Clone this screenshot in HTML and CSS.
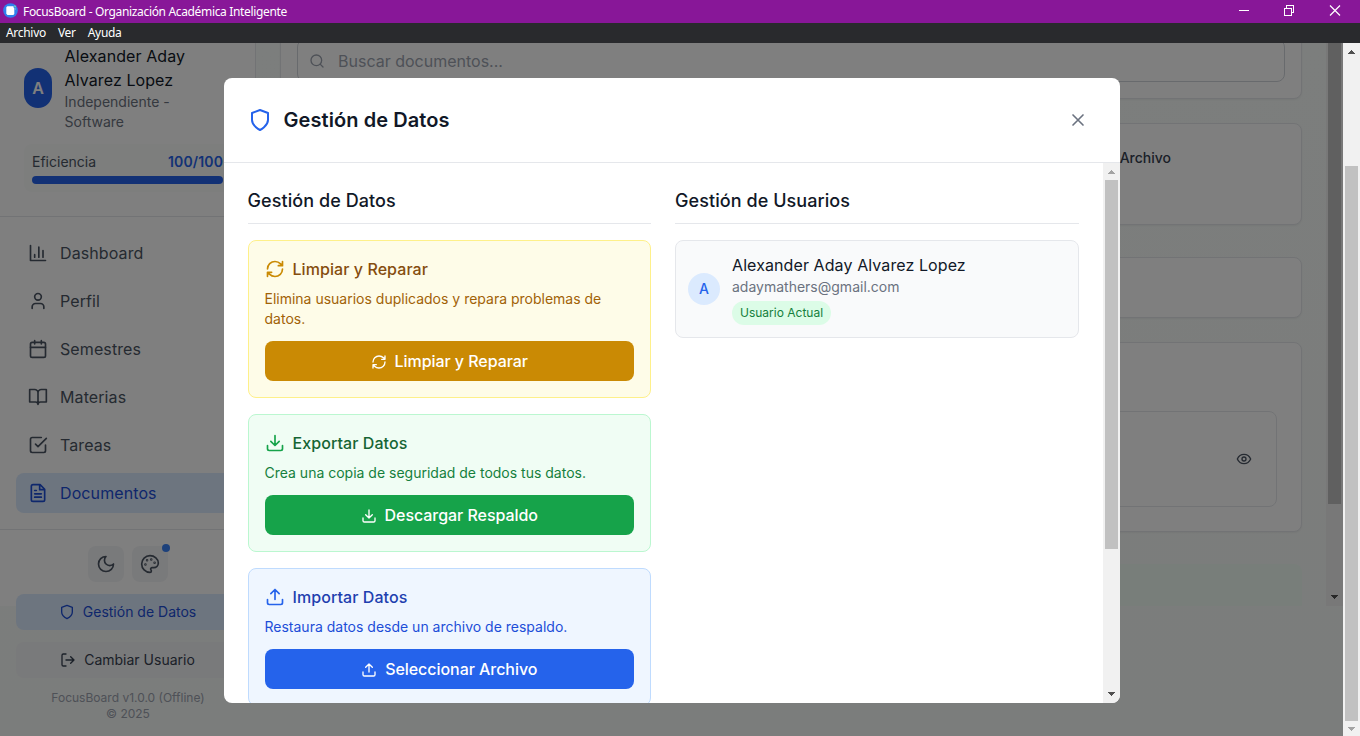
FILE: index.html
```html
<!DOCTYPE html>
<html lang="es">
<head>
<meta charset="utf-8">
<title>FocusBoard - Organización Académica Inteligente</title>
<link rel="stylesheet" href="styles.css">
</head>
<body>
<svg class="defs" width="0" height="0">
  <symbol id="shield" viewBox="0 0 24 24"><path d="M12 22s8-4 8-10V5l-8-3-8 3v7c0 6 8 10 8 10"/></symbol>
  <symbol id="refresh" viewBox="0 0 24 24"><path d="M3 12a9 9 0 0 1 9-9 9.75 9.75 0 0 1 6.74 2.74L21 8M21 3v5h-5M21 12a9 9 0 0 1-9 9 9.75 9.75 0 0 1-6.74-2.74L3 16M8 16H3v5"/></symbol>
  <symbol id="download" viewBox="0 0 24 24"><path d="M21 15v4a2 2 0 0 1-2 2H5a2 2 0 0 1-2-2v-4M7 10l5 5 5-5M12 15V3"/></symbol>
  <symbol id="upload" viewBox="0 0 24 24"><path d="M21 15v4a2 2 0 0 1-2 2H5a2 2 0 0 1-2-2v-4M17 8l-5-5-5 5M12 3v12"/></symbol>
  <symbol id="up" viewBox="0 0 7 4"><path d="M3 0h1v1h1v1h1v1h1v1H0V3h1V2h1V1h1z"/></symbol>
  <symbol id="down" viewBox="0 0 7 4"><path d="M0 0h7v1H6v1H5v1H4v1H3V3H2V2H1V1H0z"/></symbol>
</svg>
<div class="window">
  <header class="titlebar">
    <svg class="app-icon" width="15" height="15" viewBox="0 0 15 15"><circle cx="7.5" cy="7.5" r="7.3" fill="#2f80ed"/><path d="M3.3 4.2l1-1h6.2v1.2l.8.5V11l-1 1H4.5l-1.2-1.2z" fill="#fff"/><path d="M11 3h1.3v1.3M12.5 5.5v1" stroke="#7be0b0" fill="none"/></svg>
    <span class="title">FocusBoard - Organización Académica Inteligente</span>
    <svg class="controls" width="102" height="11" viewBox="0 0 102 11"><path d="M0 5.5h10M45.500 3.500h7v7h-7zM47.500 3.500v-3h7v7h-2" shape-rendering="crispEdges"/><path d="M91 .5l10 10M101 .5l-10 10" stroke-width="1.2"/></svg>
  </header>
  <nav class="menubar"><span>Archivo</span><span>Ver</span><span>Ayuda</span></nav>
  <div class="view">
    <div class="page">
      <aside class="sidebar">
        <section class="profile">
          <div class="person">
            <div class="avatar">A</div>
            <div><div class="name">Alexander Aday<br>Alvarez Lopez</div><div class="role">Independiente -<br>Software</div></div>
          </div>
          <div class="efficiency">
            <div class="eff-row"><span>Eficiencia</span><b>100/100</b></div>
            <div class="bar"></div>
          </div>
        </section>
        <nav class="nav">
          <a><svg class="icon i20" viewBox="0 0 24 24"><path d="M3 3v18h18M18 17V9M13 17V5M8 17v-3"/></svg>Dashboard</a>
          <a><svg class="icon i20" viewBox="0 0 24 24"><path d="M19 21v-2a4 4 0 0 0-4-4H9a4 4 0 0 0-4 4v2"/><circle cx="12" cy="7" r="4"/></svg>Perfil</a>
          <a><svg class="icon i20" viewBox="0 0 24 24"><rect x="3" y="4" width="18" height="18" rx="2"/><path d="M16 2v4M8 2v4M3 10h18"/></svg>Semestres</a>
          <a><svg class="icon i20" viewBox="0 0 24 24"><path d="M2 3h6a4 4 0 0 1 4 4v14a3 3 0 0 0-3-3H2zM22 3h-6a4 4 0 0 0-4 4v14a3 3 0 0 1 3-3h7z"/></svg>Materias</a>
          <a><svg class="icon i20" viewBox="0 0 24 24"><path d="M9 11l3 3L22 4M21 12v7a2 2 0 0 1-2 2H5a2 2 0 0 1-2-2V5a2 2 0 0 1 2-2h11"/></svg>Tareas</a>
          <a class="active"><svg class="icon i20" viewBox="0 0 24 24"><path d="M14.500 2H6a2 2 0 0 0-2 2v16a2 2 0 0 0 2 2h12a2 2 0 0 0 2-2V7.500zM14 2v6h6M16 13H8M16 17H8M10 9H8"/></svg>Documentos</a>
        </nav>
        <section class="side-foot">
          <div class="tools">
            <span class="tool"><svg class="icon i20" viewBox="0 0 24 24"><path d="M12 3a6 6 0 0 0 9 9 9 9 0 1 1-9-9Z"/></svg></span>
            <span class="tool"><svg class="icon i20" viewBox="0 0 24 24"><circle cx="13.500" cy="6.500" r=".5"/><circle cx="17.500" cy="10.500" r=".5"/><circle cx="8.500" cy="7.500" r=".5"/><circle cx="6.500" cy="12.500" r=".5"/><path d="M12 2C6.500 2 2 6.500 2 12s4.500 10 10 10c.926 0 1.648-.746 1.648-1.688 0-.437-.18-.835-.437-1.125-.29-.289-.438-.652-.438-1.125a1.640 1.640 0 0 1 1.668-1.668h1.996c3.051 0 5.555-2.503 5.555-5.554C21.965 6.012 17.461 2 12 2z"/></svg><i class="dot"></i></span>
          </div>
          <div class="side-btn primary"><svg class="icon i16"><use href="#shield"/></svg>Gestión de Datos</div>
          <div class="side-btn"><svg class="icon i16" viewBox="0 0 24 24"><path d="M9 21H5a2 2 0 0 1-2-2V5a2 2 0 0 1 2-2h4M16 17l5-5-5-5M21 12H9"/></svg>Cambiar Usuario</div>
          <div class="version">FocusBoard v1.0.0 (Offline)<br>© 2025</div>
        </section>
      </aside>
      <main class="main">
        <div class="panel search-panel"><div class="search"><svg class="icon i16" viewBox="0 0 24 24"><circle cx="11" cy="11" r="8"/><path d="M21 21l-4.300-4.300"/></svg>Buscar documentos...</div></div>
        <div class="panel filters"><span>Archivo</span></div>
        <div class="panel summary"></div>
        <div class="panel docs"><div class="doc"><svg class="icon i16" viewBox="0 0 24 24"><path d="M2 12s3-7 10-7 10 7 10 7-3 7-10 7-10-7-10-7Z"/><circle cx="12" cy="12" r="3"/></svg></div></div>
        <div class="notice"></div>
      </main>
      <div class="scroll inner"><i class="thumb"></i><svg class="arrow"><use href="#down"/></svg></div>
    </div>
    <div class="scroll outer"><svg class="arrow"><use href="#up"/></svg><i class="thumb"></i><svg class="arrow off"><use href="#down"/></svg></div>
    <div class="overlay">
      <div class="modal">
        <header class="modal-head">
          <svg class="icon i24 blue"><use href="#shield"/></svg><h2>Gestión de Datos</h2>
          <svg class="icon i20 close" viewBox="0 0 24 24"><path d="M18 6L6 18M6 6l12 12"/></svg>
        </header>
        <div class="modal-body">
          <div class="content">
            <section class="col">
              <h3>Gestión de Datos</h3>
              <div class="action yellow">
                <h4><svg class="icon i20"><use href="#refresh"/></svg>Limpiar y Reparar</h4>
                <p>Elimina usuarios duplicados y repara problemas de datos.</p>
                <div class="btn"><svg class="icon i16"><use href="#refresh"/></svg>Limpiar y Reparar</div>
              </div>
              <div class="action green">
                <h4><svg class="icon i20"><use href="#download"/></svg>Exportar Datos</h4>
                <p>Crea una copia de seguridad de todos tus datos.</p>
                <div class="btn"><svg class="icon i16"><use href="#download"/></svg>Descargar Respaldo</div>
              </div>
              <div class="action azure">
                <h4><svg class="icon i20"><use href="#upload"/></svg>Importar Datos</h4>
                <p>Restaura datos desde un archivo de respaldo.</p>
                <div class="btn"><svg class="icon i16"><use href="#upload"/></svg>Seleccionar Archivo</div>
              </div>
            </section>
            <section class="col">
              <h3>Gestión de Usuarios</h3>
              <div class="user">
                <div class="user-avatar">A</div>
                <div><div class="user-name">Alexander Aday Alvarez Lopez</div><div class="mail">adaymathers@gmail.com</div><span class="badge">Usuario Actual</span></div>
              </div>
            </section>
          </div>
          <div class="scroll modal-scroll"><svg class="arrow off"><use href="#up"/></svg><i class="thumb"></i><svg class="arrow"><use href="#down"/></svg></div>
        </div>
      </div>
    </div>
  </div>
</div>
</body>
</html>
```
FILE: styles.css
```css
* { box-sizing: border-box; }
body { margin: 0; font: 16px/24px Inter, sans-serif; color: #111827; }
h2, h3, h4, p { margin: 0; }
.defs { position: absolute; }
.window { width: 1360px; height: 736px; display: flex; flex-direction: column; overflow: hidden; }

.titlebar { height: 23px; flex: none; background: #881798; color: #fff; display: flex; align-items: center; padding: 0 19px 2px 3px; font: 12px/20px "Noto Sans", sans-serif; }
.title { margin-left: 5px; flex: 1; letter-spacing: -.34px; padding-top: 3px; }
.controls { stroke: #fff; fill: none; }
.menubar { height: 20px; flex: none; background: #292a2d; color: #fff; display: flex; gap: 12px; padding-left: 6px; font: 12px/20px "Noto Sans", sans-serif; letter-spacing: -.3px; }

.view { flex: 1; display: flex; position: relative; overflow: hidden; }
.page { flex: 1; display: flex; height: 693px; background: linear-gradient(#f8fcfa, #f7faf8); }

.icon { fill: none; stroke: currentColor; stroke-width: 2; stroke-linecap: round; stroke-linejoin: round; flex: none; }
.i16 { width: 16px; height: 16px; }
.i20 { width: 20px; height: 20px; }
.i24 { width: 24px; height: 24px; }

.sidebar { width: 256px; height: 563px; flex: none; background: #fff; border-right: 1px solid #e5e7eb; }
.profile { padding: 1px 24px 24px; height: 174px; border-bottom: 1px solid #e5e7eb; }
.person { display: flex; align-items: center; gap: 12.6px; }
.avatar { width: 28px; height: 40px; border-radius: 14px; background: #2563eb; color: #fff; font-weight: 600; display: grid; place-items: center; }
.name { letter-spacing: .09px; }
.role { font-size: 14px; line-height: 20px; color: #6b7280; }
.efficiency { margin-top: 12px; padding: 8px; border-radius: 8px; background: #fafcfb; }
.eff-row { display: flex; justify-content: space-between; font-size: 14px; line-height: 20px; color: #4b5563; }
.eff-row b { font-weight: 600; letter-spacing: .12px; color: #2563eb; }
.bar { height: 8px; margin-top: 4px; border-radius: 4px; background: #2563eb; }
.nav { padding: 16px 15px 16px 16px; display: flex; flex-direction: column; gap: 8px; border-bottom: 1px solid #e5e7eb; }
.nav a { height: 40px; padding: 0 12px; display: flex; align-items: center; gap: 12px; color: #4b5563; border-radius: 8px; letter-spacing: .1px; }
.nav .active { background: #dbeafe; color: #1d4ed8; }
.side-foot { padding: 16px 15px 0 16px; }
.tools { display: flex; gap: 8px; justify-content: center; color: #4b5563; }
.tool { width: 36px; height: 36px; border-radius: 8px; background: #f3f4f6; display: grid; place-items: center; position: relative; }
.dot { position: absolute; width: 8px; height: 8px; right: -2px; top: -2px; border-radius: 50%; background: #3b82f6; }
.side-btn { height: 36px; margin-top: 12px; padding-right: 1px; border-radius: 8px; background: #f3f4f6; color: #374151; display: flex; align-items: center; justify-content: center; gap: 8px; font-size: 14px; }
.side-btn.primary { background: #dbeafe; color: #1d4ed8; }
.version { margin-top: 12px; text-align: center; font-size: 12px; line-height: 16px; color: #9ca3af; }

.main { flex: 1; height: 563px; overflow: hidden; padding: 0 24px; }
.panel { background: #fff; border: 1px solid #e5e7eb; border-radius: 8px; box-shadow: 0 1px 2px rgba(0,0,0,.05); }
.search-panel { height: 77px; margin-top: -21px; padding: 16px; }
.search { height: 43px; border: 1px solid #d1d5db; border-radius: 8px; padding-left: 11px; display: flex; align-items: center; gap: 13px; color: #9ca3af; }
.filters { height: 102px; margin-top: 24px; padding: 24px 130px; display: flex; justify-content: flex-end; font-size: 14px; line-height: 20px; font-weight: 500; color: #374151; }
.summary { height: 61px; margin-top: 32px; }
.docs { height: 190px; margin-top: 24px; padding: 68px 24px 24px; }
.doc { height: 96px; border: 1px solid #e5e7eb; border-radius: 8px; display: flex; justify-content: flex-end; align-items: center; padding-right: 24px; color: #4b5563; }
.notice { height: 60px; margin-top: 32px; background: #f0fdf4; border-radius: 8px; }

.scroll { width: 17px; flex: none; background: #f1f1f1; display: flex; flex-direction: column; align-items: center; }
.arrow { width: 7px; height: 4px; margin: 7px 0 6px; flex: none; fill: #505050; shape-rendering: crispEdges; }
.arrow:last-child { margin-bottom: 7px; }
.arrow.off { fill: #a3a3a3; }
.thumb { width: 13px; background: #c1c1c1; }
.inner { height: 563px; }
.inner .thumb { height: 461px; margin-bottom: auto; }
.outer .thumb { height: 555px; margin: 106px 0 auto; }
.outer .arrow:last-child { margin: 6px 0 5px; }

/* Covers the page but leaves the window scrollbar free */
.overlay { position: absolute; inset: 0 17px 0 0; background: rgba(0,0,0,.5); padding: 35px 223.5px 33px; }
.modal { height: 625px; border-radius: 8px; background: #fff; overflow: hidden; display: flex; flex-direction: column; }
.modal-head { height: 85px; flex: none; border-bottom: 1px solid #e5e7eb; padding: 0 32px 0 24px; display: flex; align-items: center; gap: 12px; }
.blue { color: #2563eb; }
.close { color: #6b7280; }
h2 { flex: 1; font-size: 20px; line-height: 28px; font-weight: 600; letter-spacing: .08px; }
.modal-body { flex: 1; display: flex; min-height: 0; }
.content { flex: 1; display: grid; grid-template-columns: 1fr 1fr; gap: 24px; padding: 24px; overflow: hidden; }
.col { display: flex; flex-direction: column; gap: 16px; }
h3 { font-size: 18px; line-height: 28px; font-weight: 500; letter-spacing: .07px; color: #111827; padding-bottom: 8px; border-bottom: 1px solid #e5e7eb; }
.action { border: 1px solid; border-radius: 8px; padding: 16px; }
h4 { display: flex; align-items: center; gap: 8px; font-weight: 500; font-size: 16px; letter-spacing: .07px; margin-bottom: 8px; }
.action p { font-size: 14px; line-height: 20px; margin-bottom: 12px; }
.btn { height: 40px; border-radius: 8px; color: #fff; font-weight: 500; letter-spacing: -.05px; display: flex; align-items: center; justify-content: center; gap: 8px; }
.btn .icon { margin-top: 2px; }
.yellow { background: #fefce8; border-color: #fef08a; color: #a16207; }
.yellow h4 { color: #854d0e; }
.yellow h4 .icon { color: #ca8a04; }
.yellow .btn { background: #ca8a04; }
.green { background: #f0fdf4; border-color: #bbf7d0; color: #15803d; }
.green h4 { color: #166534; }
.green h4 .icon { color: #16a34a; }
.green .btn { background: #16a34a; }
.azure { background: #eff6ff; border-color: #bfdbfe; color: #1d4ed8; }
.azure h4 { color: #1e40af; }
.azure h4 .icon { color: #2563eb; }
.azure .btn { background: #2563eb; }
.user { border: 1px solid #e5e7eb; border-radius: 8px; background: #f9fafb; padding: 12px; display: flex; align-items: center; gap: 12px; }
.user-avatar { width: 32px; height: 32px; border-radius: 50%; background: #dbeafe; color: #2563eb; font-size: 14px; font-weight: 500; display: grid; place-items: center; }
.user-name { letter-spacing: .09px; }
.mail { font-size: 14px; line-height: 20px; color: #6b7280; }
.badge { display: block; width: fit-content; margin-top: 4px; padding: 4px 8px; border-radius: 12px; background: #dcfce7; color: #15803d; font-size: 12px; line-height: 16px; }
.modal-scroll .thumb { height: 369px; margin-bottom: auto; }
```
